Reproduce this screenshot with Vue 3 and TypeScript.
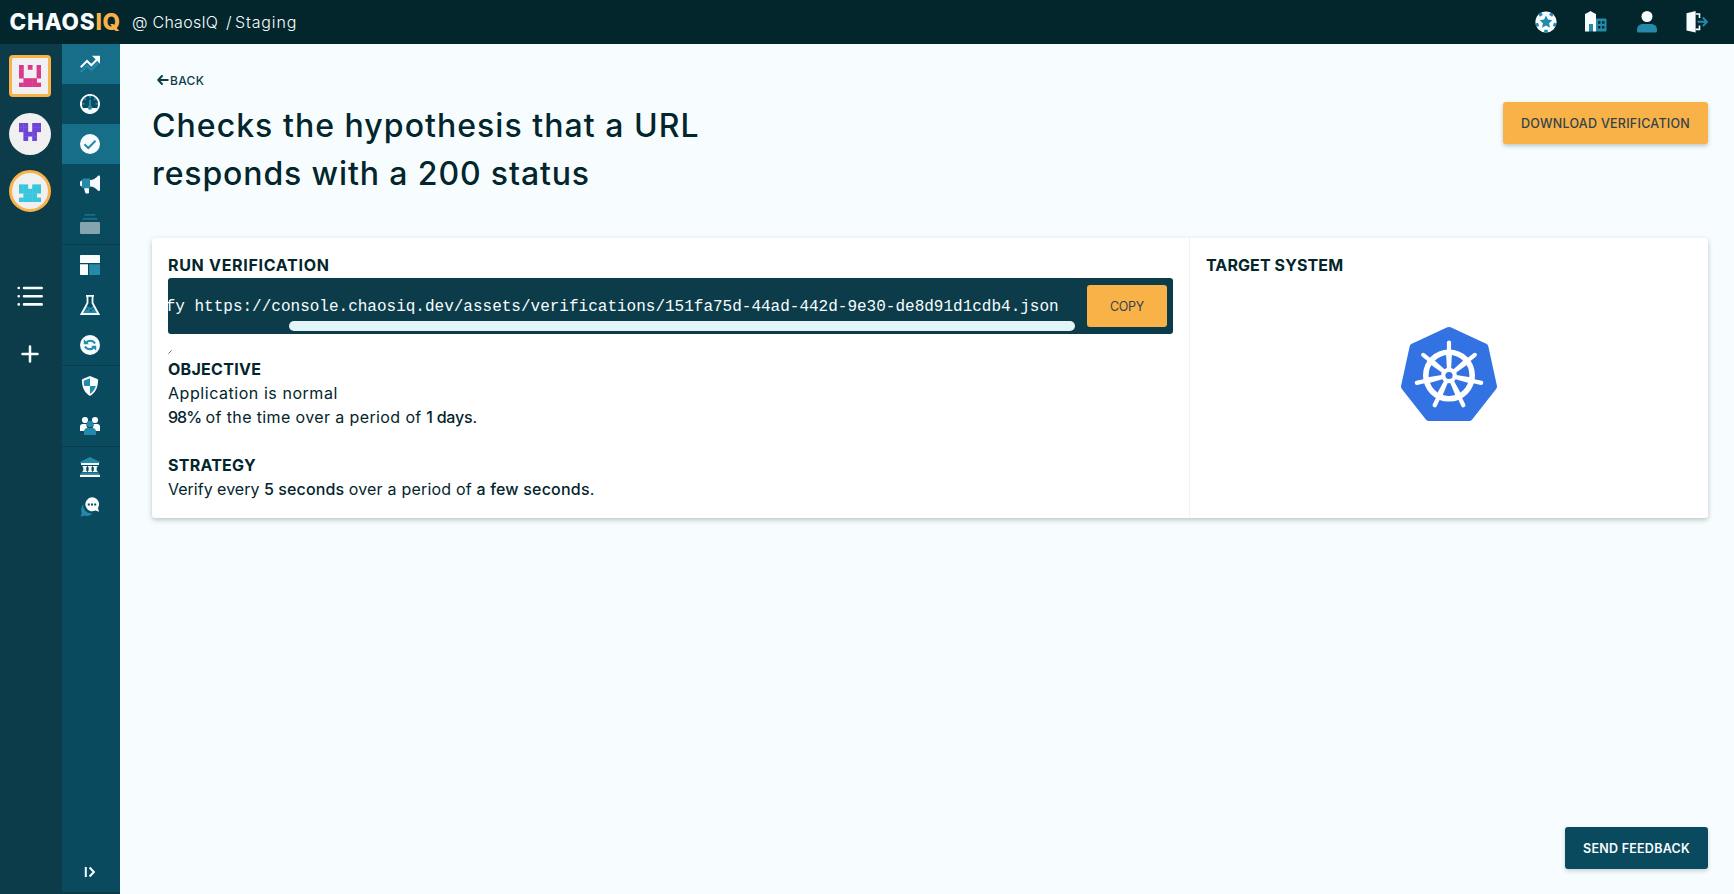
<script setup lang="ts">
interface Avatar { name: string; color: string; rows: string[]; square?: boolean; ring?: boolean }
interface NavItem { icon: string; active?: boolean }

const avatars: Avatar[] = [
  { name: 'pink', color: '#d93a8d', square: true, ring: true, rows: ['10101', '10001', '10001', '01110', '11111'] },
  { name: 'violet', color: '#7044d6', rows: ['11011', '11011', '01110', '01010', '00000'] },
  { name: 'cyan', color: '#39c6dc', ring: true, rows: ['00000', '11011', '11111', '01110', '11111'] },
]

const groups: NavItem[][] = [
  [{ icon: 'trend', active: true }, { icon: 'gauge' }, { icon: 'check', active: true }, { icon: 'horn' }, { icon: 'stack' }],
  [{ icon: 'layout' }, { icon: 'flask' }, { icon: 'sync' }],
  [{ icon: 'shield' }, { icon: 'users' }],
  [{ icon: 'bank' }, { icon: 'chat' }],
]

const cells = (rows: string[]) =>
  rows.flatMap((row, y) => [...row].map((v, x) => ({ x, y, on: v === '1' })).filter((c) => c.on))

const spokes = Array.from({ length: 7 }, (_, i) => (i * 360) / 7)
const chips = Array.from({ length: 5 }, (_, i) => i * 72)
</script>

<template>
  <div class="app">
    <header class="topbar">
      <div class="brand">CHAOS<span>IQ</span></div>
      <div class="crumb"><span class="org">@ ChaosIQ</span><span class="slash">/</span><span class="team">Staging</span></div>
      <div class="tools">
        <svg class="tool" viewBox="0 0 22 22">
          <circle cx="11" cy="11" r="10.6" fill="#f7fdff" />
          <g fill="#258aaa">
            <path d="M11 4.6l1.9 4 4.4.6-3.2 3.1.8 4.4L11 14.6l-3.9 2.1.8-4.4-3.2-3.1 4.4-.6z" />
            <rect v-for="a in chips" :key="a" x="9.2" y="18.8" width="3.6" height="2.8" :transform="`rotate(${a} 11 11)`" />
          </g>
        </svg>
        <svg class="tool" viewBox="0 0 22 22">
          <path d="M11 7.5h9.5a1 1 0 0 1 1 1v11a1 1 0 0 1-1 1H11z" fill="#258aaa" />
          <path d="M13 10.2h2.4v2.6H13zM17 10.2h2.4v2.6H17zM13 15h2.4v2.6H13zM17 15h2.4v2.6H17z" fill="#03252c" />
          <path d="M0 3l3-1.5L5.5 0 8 1.5l3 1.5v17.5H8V13H4v7.5H0z" fill="#f7fdff" />
          <path d="M4 13h4v7.5H4z" fill="#258aaa" />
        </svg>
        <svg class="tool" viewBox="0 0 22 22">
          <circle cx="11" cy="5.5" r="5.5" fill="#f7fdff" />
          <path d="M1 18.5a5.5 5.5 0 0 1 5.5-5.5h9A5.5 5.5 0 0 1 21 18.5V20a1.5 1.5 0 0 1-1.5 1.5h-17A1.5 1.5 0 0 1 1 20z" fill="#258aaa" />
        </svg>
        <svg class="tool" viewBox="0 0 22 22">
          <path d="M.5 2.2L9.6 0v21.6L.5 19.6z" fill="#f7fdff" />
          <path d="M9.5 3h4v4M9.5 18.4h4v-4" fill="none" stroke="#f7fdff" stroke-width="1.6" />
          <path d="M11.5 10.8h9M16.8 6.5l4.2 4.3-4.2 4.3" fill="none" stroke="#258aaa" stroke-width="2" />
        </svg>
      </div>
    </header>

    <div class="body">
      <aside class="teams">
        <div v-for="a in avatars" :key="a.name" class="avatar" :class="{ square: a.square, ring: a.ring }">
          <svg viewBox="0 0 5 5">
            <rect v-for="c in cells(a.rows)" :key="`${c.x}-${c.y}`" :x="c.x" :y="c.y" width="1.08" height="1.08" :fill="a.color" />
          </svg>
        </div>
        <svg class="list" viewBox="0 0 26 20" fill="none" stroke="#f7fdff" stroke-width="2.6" stroke-linecap="round">
          <path d="M7 2h17.7M7 10.2h17.7M7 18.4h17.7M1.7 2h.1M1.7 10.2h.1M1.7 18.4h.1" />
        </svg>
        <svg class="plus" viewBox="0 0 18 18" fill="none" stroke="#f7fdff" stroke-width="2.5" stroke-linecap="round">
          <path d="M9 1.5v15M1.5 9h15" />
        </svg>
      </aside>

      <nav class="menu">
        <div v-for="(group, g) in groups" :key="g" class="group">
          <a v-for="item in group" :key="item.icon" class="item" :class="{ active: item.active }">
            <svg viewBox="0 0 20 20">
              <g v-if="item.icon === 'trend'" fill="none" stroke-width="2.1">
                <path d="M.7 18l6.3-6.3 4.3 4.3 6.7-7" stroke="#258aaa" />
                <path d="M.7 13.2L7 6.9l4.3 4.3 6-6" stroke="#f7fdff" />
                <path d="M12 1.7h8v8z" fill="#f7fdff" />
              </g>
              <g v-else-if="item.icon === 'gauge'">
                <circle cx="10" cy="10" r="9.1" fill="#0a4a5e" stroke="#f7fdff" stroke-width="1.9" />
                <path d="M2.7 14h14.6A9 9 0 0 1 10 19a9 9 0 0 1-7.3-5z" fill="#f7fdff" />
                <path d="M10 5.5V13M10 1.9v2M2.3 9.8h2.2M15.5 9.8h2.2M4.3 4.3l1.6 1.6M15.7 4.3l-1.6 1.6" stroke="#258aaa" stroke-width="2" fill="none" />
                <circle cx="10" cy="13.5" r="2.2" fill="#258aaa" />
              </g>
              <g v-else-if="item.icon === 'check'">
                <circle cx="10" cy="10" r="10" fill="#f7fdff" />
                <path d="M4.5 10.3l3.8 3.7 7.2-7.3" fill="none" stroke="#258aaa" stroke-width="2" />
              </g>
              <g v-else-if="item.icon === 'horn'">
                <path d="M10 6c3.5 0 6-2 7.8-4.1.8-.9 2.2-.5 2.2.7v13.2c0 1.2-1.4 1.7-2.2.7C16 14.5 13.5 12.5 10 12.5z" fill="#f7fdff" />
                <path d="M2 6.5A2 2 0 0 0 0 8.500v2a2 2 0 0 0 2 2zM4 14h5v4.5a1 1 0 0 1-1 1H6.500a1.500 1.500 0 0 1-1.400-1z" fill="#f7fdff" />
                <path d="M3.5 4.500H10v9.800H3.500a1.500 1.500 0 0 1-1.500-1.500V6a1.500 1.500 0 0 1 1.500-1.500z" fill="#258aaa" />
              </g>
              <g v-else-if="item.icon === 'stack'">
                <path d="M4.200 1.700l1-1.700h9.600l1 1.700zM2.200 5.800l1-1.800h13.600l1 1.800z" fill="#196e87" />
                <rect y="8" width="20" height="12" rx="1.3" fill="#84a5af" />
              </g>
              <g v-else-if="item.icon === 'layout'">
                <path d="M0 .8A.8.8 0 0 1 .8 0h18.4a.8.8 0 0 1 .8.8V8H0zM0 9.2h8V20H.8a.8.8 0 0 1-.8-.8z" fill="#f7fdff" />
                <path d="M9.2 9.2H20v10a.8.8 0 0 1-.8.8h-10z" fill="#258aaa" />
              </g>
              <g v-else-if="item.icon === 'flask'">
                <path d="M6.5 10h7l4.7 8.5H1.8z" fill="#258aaa" />
                <path d="M6 11l1.5-2V1h5v8l1 2c-2 0-2 2.2-4 1.5S8 10.5 6 11z" fill="#0a4a5e" />
                <circle cx="10.8" cy="15.5" r="1" fill="#0a4a5e" /><circle cx="7.3" cy="13.9" r=".7" fill="#0a4a5e" /><circle cx="13" cy="13.8" r=".8" fill="#0a4a5e" />
                <path d="M6 .9h8M7.5 1v7L1.5 19h17l-6-11V1" fill="none" stroke="#f7fdff" stroke-width="1.8" />
              </g>
              <g v-else-if="item.icon === 'sync'">
                <circle cx="10" cy="10" r="10" fill="#f7fdff" />
                <path d="M5.7 8.3C8 4.9 12.5 4.8 15 8.5M14.3 11.7C12 15.1 7.5 15.2 5 11.5" fill="none" stroke="#258aaa" stroke-width="2.2" />
                <path d="M3.8 4.3v5h5zM16.2 15.7v-5h-5z" fill="#258aaa" />
              </g>
              <g v-else-if="item.icon === 'shield'">
                <path d="M10 0l7.3 3c.5.2.8.6.8 1.1 0 7.5-3 13.3-8.1 15.9C4.9 17.4 1.9 11.6 1.9 4.1c0-.5.3-.9.8-1.1z" fill="#f7fdff" />
                <path d="M10 2.2V10H4.2A18 18 0 0 1 3.7 4.8zM10 10h5.8c-.9 3.5-2.9 6.2-5.8 7.8z" fill="#258aaa" />
              </g>
              <g v-else-if="item.icon === 'users'">
                <g fill="#f7fdff">
                  <circle cx="5" cy="4" r="3.1" /><circle cx="15" cy="4" r="3.1" />
                  <path d="M0 15v-4.2A2.8 2.8 0 0 1 2.8 8h3.6A5 5 0 0 0 7.5 12L4 15zM20 15v-4.2A2.8 2.8 0 0 0 17.2 8h-3.6A5 5 0 0 1 12.5 12l3.5 3z" />
                </g>
                <circle cx="10" cy="8" r="3.2" fill="#258aaa" />
                <path d="M4 19v-3.2A3.8 3.8 0 0 1 7.8 12h4.4a3.8 3.8 0 0 1 3.8 3.8V18a1 1 0 0 1-1 1z" fill="#258aaa" />
              </g>
              <g v-else-if="item.icon === 'bank'">
                <path d="M0 5l10-5 10 5v1H0z" fill="#258aaa" />
                <path d="M1 6h18v2H1zM2.5 9H7v1l-.8.3v3.4l.8.3v1H2.5v-1l.8-.3v-3.4L2.5 10zM7.8 9h4.5v1l-.8.3v3.4l.8.3v1H7.8v-1l.8-.3v-3.4L7.8 10zM13 9h4.5v1l-.8.3v3.4l.8.3v1H13v-1l.8-.3v-3.4L13 10z" fill="#f7fdff" />
                <path d="M1 15.5h18V17H1z" fill="#258aaa" />
                <path d="M0 17.7h20V20H0z" fill="#f7fdff" />
              </g>
              <g v-else>
                <path d="M3.5 7A7.5 7.5 0 0 0 12.5 16c-1.7 2.6-5 3.5-8.5 2.6L.6 19.7l1.2-3.4C.5 13 1.5 9 3.5 7z" fill="#258aaa" />
                <path d="M12 .3a7 7 0 0 1 6 10.6l1 3.8-3.6-1.1A7 7 0 1 1 12 .3z" fill="#f7fdff" />
                <path d="M7.8 6.4h2v2h-2zM11 6.4h2v2h-2zM14.2 6.4h2v2h-2z" fill="#0a4a5e" />
              </g>
            </svg>
          </a>
        </div>
        <div class="expand">
          <svg viewBox="0 0 12 12" fill="none" stroke="#f7fdff">
            <path d="M1.8 1v10" stroke-width="2" /><path d="M5.6 1.5l4.3 4.5-4.3 4.5" stroke-width="2" />
          </svg>
        </div>
      </nav>

      <main class="page">
        <a class="back">
          <svg viewBox="0 0 12 10" fill="none" stroke="#0c3c49" stroke-width="1.9" stroke-linecap="round" stroke-linejoin="round">
            <path d="M5 1L1.2 5 5 9M1.5 5h9.3" />
          </svg>
          <span>BACK</span>
        </a>
        <div class="head">
          <h1><span class="t1">Checks the hypothesis that a URL</span><br /><span class="t2">responds with a 200 status</span></h1>
          <button class="btn download">DOWNLOAD VERIFICATION</button>
        </div>

        <section class="card">
          <div class="details">
            <h2 class="run">RUN VERIFICATION</h2>
            <div class="code">
              <div class="scroller">
                <code>fy https://console.chaosiq.dev/assets/verifications/151fa75d-44ad-442d-9e30-de8d91d1cdb4.json</code>
                <div class="track"><div class="thumb"></div></div>
              </div>
              <button class="btn copy">COPY</button>
            </div>
            <div class="grip"><svg viewBox="0 0 4 4"><path d="M.3 3.7L3.7.3" stroke="#555" stroke-width=".8" /></svg></div>
            <h2 class="objective">OBJECTIVE</h2>
            <p class="plain">Application is normal</p>
            <p><b class="pct">98%</b> <span class="s1">of the time over a period of</span> <b class="days">1 days</b>.</p>
            <h2 class="strategy">STRATEGY</h2>
            <p><span class="s2">Verify every</span> <b class="secs">5 seconds</b> <span class="s3">over a period of</span> <b class="few">a few seconds</b>.</p>
          </div>
          <div class="target">
            <h2 class="system">TARGET SYSTEM</h2>
            <svg class="k8s" viewBox="0 0 96 94">
              <path d="M48 4L83.5 20.500 92 59.500 68 90H28L4 59.500 12.500 20.500z" fill="#3272e2" stroke="#3272e2" stroke-width="8" stroke-linejoin="round" />
              <g fill="none" stroke="#fff" stroke-linecap="round">
                <circle cx="48" cy="48.5" r="23.2" stroke-width="5.6" />
                <g v-for="a in spokes" :key="a" :transform="`rotate(${a} 48 48.5)`">
                  <path d="M48 25V15.5" stroke-width="4.2" />
                  <path d="M45 26h6L50 43h-4z" fill="#fff" stroke="none" />
                </g>
              </g>
              <circle cx="48" cy="48.5" r="7.8" fill="#fff" />
              <circle cx="48" cy="48.5" r="3.6" fill="#3272e2" />
            </svg>
          </div>
        </section>
        <button class="btn feedback">SEND FEEDBACK</button>
      </main>
    </div>
  </div>
</template>

<style>
body { margin: 0; overflow: hidden; }
</style>

<style scoped>
* { box-sizing: border-box; }
.app { display: flex; flex-direction: column; width: 100%; height: 100vh; background: #f7fdff; color: #03252c; font-family: Inter, "Liberation Sans", sans-serif; }
svg { display: block; }
.topbar { display: flex; align-items: center; height: 44px; flex: none; padding: 0 26px 0 9.5px; background: #03252c; color: #f7fdff; }
.brand { width: 122.5px; font-size: 22.5px; font-weight: 800; line-height: 44px; letter-spacing: 0.75px; white-space: nowrap; }
.brand span { color: #f9b248; }
.crumb { display: flex; flex: 1; font-size: 16px; font-weight: 300; line-height: 45px; white-space: nowrap; }
.org { width: 94px; letter-spacing: 0.25px; }
.slash { width: 9px; }
.team { letter-spacing: 0.85px; }
.tools { display: flex; gap: 28.5px; }
.tool { width: 22px; height: 22px; }

.body { display: flex; flex: 1; min-height: 0; }
.teams { display: flex; flex-direction: column; align-items: center; width: 62px; padding: 11px 2px 0 0; background: #0c3c49; }
.avatar { display: flex; align-items: center; justify-content: center; width: 42px; height: 42px; margin-bottom: 15.5px; border-radius: 50%; background: #f0f0f0; }
.avatar.ring { border: 3px solid #f9b248; }
.avatar.square { border-radius: 4px; }
.avatar svg { width: 22px; height: 22px; }
.list { width: 26px; height: 20px; margin-top: 58.5px; }
.plus { width: 18px; height: 18px; margin-top: 39px; }

.menu { display: flex; flex-direction: column; width: 58px; background: #0a4a5e; border-bottom: 2px solid #0c3c49; }
.group { border-bottom: 1px solid #0c3c49; }
.group:nth-child(4) { border-bottom: 0; }
.item { display: flex; align-items: center; justify-content: center; height: 40px; padding-right: 2px; }
.item.active { background: #176e88; }
.item svg { width: 20px; height: 20px; }
.expand { display: flex; align-items: center; justify-content: center; height: 40px; margin-top: auto; padding-right: 2px; }
.expand svg { width: 12px; height: 12px; }

.page { display: flex; flex-direction: column; flex: 1; padding: 27px 26px 25px 32px; }
.back { display: flex; align-items: center; gap: 1px; height: 19px; padding: 0 0 1px 5px; font-size: 12px; font-weight: 500; letter-spacing: 0.33px; color: #0c3c49; }
.back svg { width: 12px; height: 10px; }
.head { display: flex; justify-content: space-between; align-items: flex-start; height: 148px; padding-top: 12px; }
h1 { margin: 0; font-size: 32px; font-weight: 500; line-height: 48px; white-space: nowrap; }
.t1 { letter-spacing: 1.04px; }
.t2 { letter-spacing: 0.88px; }
.btn { height: 42px; padding: 0; border: 0; border-radius: 3px; background: #f9b248; color: #33434b; font: 500 12.5px Inter, "Liberation Sans", sans-serif; white-space: nowrap; }
.download { width: 205px; letter-spacing: 0.27px; box-shadow: 0 2px 4px rgba(3, 37, 44, 0.25); }
.feedback { width: 143px; flex: none; margin-top: auto; align-self: flex-end; background: #0a4a5e; color: #f7fdff; font-weight: 600; letter-spacing: 0.25px; box-shadow: 0 2px 4px rgba(3, 37, 44, 0.2); }
.card { display: flex; flex: none; height: 280px; border-radius: 3px; background: #fff; box-shadow: 0 2px 5px rgba(3, 37, 44, 0.26); }
.details { width: 1037px; padding: 15px 16px 0 16px; }
.target { flex: 1; padding: 15px 16px; border-left: 1px solid #f0f2f3; }
h2 { margin: 0; font-size: 16px; font-weight: 700; line-height: 24px; white-space: nowrap; }
p { margin: 0; font-size: 16px; line-height: 24px; white-space: nowrap; }
b { font-weight: 500; }
.run { letter-spacing: 0.7px; }
.system { letter-spacing: 0.1px; }
.objective { letter-spacing: 0.28px; }
.strategy { margin-top: 24px; letter-spacing: 0.25px; }
.plain { letter-spacing: 0.55px; }
.pct { letter-spacing: -1px; }
.s1 { letter-spacing: 0.38px; }
.days { letter-spacing: -0.2px; }
.s2 { letter-spacing: 0; }
.secs { letter-spacing: 0.12px; }
.s3 { letter-spacing: 0.2px; }
.few { letter-spacing: 0.2px; }
.code { display: flex; height: 56px; margin-top: 1px; border-radius: 3px; background: #0c3c49; padding-right: 6px; }
.scroller { width: 907px; margin-right: 12px; overflow: hidden; }
code { display: block; height: 43px; padding-top: 12px; text-indent: -2.3px; font: 16px/34px "Liberation Mono", monospace; color: #f7fdff; white-space: pre; }
.track { padding-left: 121px; }
.thumb { width: 786px; height: 10px; border-radius: 5px; background: #e4f5fa; }
.copy { width: 80px; margin-top: 7px; font-weight: 400; letter-spacing: -0.3px; }
.grip { height: 23px; padding-top: 16px; }
.grip svg { width: 4px; height: 4px; }
.k8s { width: 96px; height: 94px; margin: 50px auto 0; }
</style>
